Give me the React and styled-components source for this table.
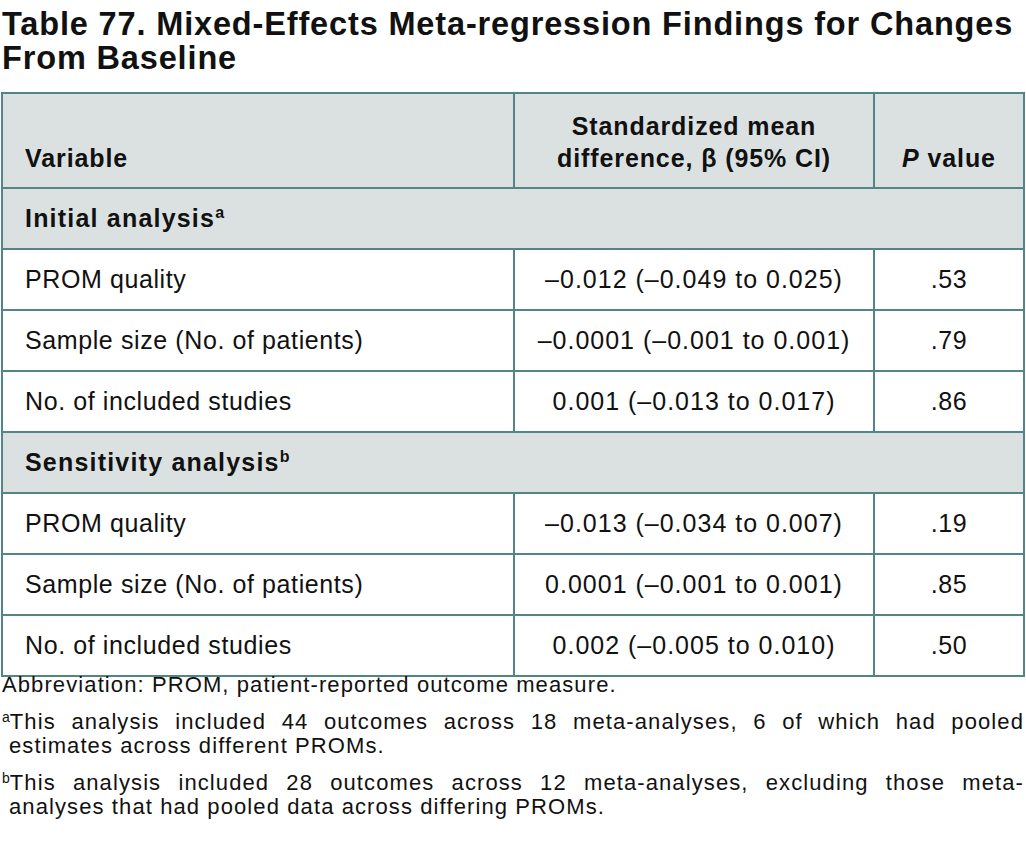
import React from "react";
import styled, { createGlobalStyle } from "styled-components";

const GlobalStyle = createGlobalStyle`
  html, body {
    margin: 0;
    padding: 0;
    background: #ffffff;
  }
  body {
    font-family: "Liberation Sans", Arial, Helvetica, sans-serif;
    color: #111111;
  }
`;

const BORDER = "#548585";
const HEAD_BG = "#dbe1e1";

const rows = [
  { section: "Initial analysis", mark: "a" },
  { variable: "PROM quality", smd: "–0.012 (–0.049 to 0.025)", p: ".53" },
  { variable: "Sample size (No. of patients)", smd: "–0.0001 (–0.001 to 0.001)", p: ".79" },
  { variable: "No. of included studies", smd: "0.001 (–0.013 to 0.017)", p: ".86" },
  { section: "Sensitivity analysis", mark: "b" },
  { variable: "PROM quality", smd: "–0.013 (–0.034 to 0.007)", p: ".19" },
  { variable: "Sample size (No. of patients)", smd: "0.0001 (–0.001 to 0.001)", p: ".85" },
  { variable: "No. of included studies", smd: "0.002 (–0.005 to 0.010)", p: ".50" },
];

export default function App() {
  return (
    <Page>
      <GlobalStyle />
      <Title>
        Table 77. Mixed-Effects Meta-regression Findings for Changes From
        Baseline
      </Title>
      <Table>
        <colgroup>
          <col style={{ width: 512 }} />
          <col style={{ width: 360 }} />
          <col />
        </colgroup>
        <thead>
          <tr>
            <HeadCell>Variable</HeadCell>
            <HeadCell center>
              Standardized mean
              <br />
              difference, β (95% CI)
            </HeadCell>
            <HeadCell center>
              <i>P</i> value
            </HeadCell>
          </tr>
        </thead>
        <tbody>
          {rows.map((r, i) =>
            r.section ? (
              <tr key={i}>
                <SectionCell colSpan={3}>
                  {r.section}
                  <sup>{r.mark}</sup>
                </SectionCell>
              </tr>
            ) : (
              <tr key={i}>
                <Cell>{r.variable}</Cell>
                <Cell center numeric>
                  {r.smd}
                </Cell>
                <Cell center>{r.p}</Cell>
              </tr>
            )
          )}
        </tbody>
      </Table>
      <Notes>
        <Note>
          <Line>Abbreviation: PROM, patient-reported outcome measure.</Line>
        </Note>
        <Note>
          <Line full>
            <sup>a</sup>This analysis included 44 outcomes across 18
            meta-analyses, 6 of which had pooled
          </Line>
          <Line indent>estimates across different PROMs.</Line>
        </Note>
        <Note>
          <Line full>
            <sup>b</sup>This analysis included 28 outcomes across 12
            meta-analyses, excluding those meta-
          </Line>
          <Line indent>analyses that had pooled data across differing PROMs.</Line>
        </Note>
      </Notes>
    </Page>
  );
}

const Page = styled.div`
  width: 1026px;
  box-sizing: border-box;
  padding: 0 1px;
`;

const Title = styled.h1`
  margin: 0;
  padding: 7px 1px 0;
  height: 92px;
  box-sizing: border-box;
  font-size: 32.5px;
  line-height: 34px;
  font-weight: 700;
  letter-spacing: 0.85px;
`;

const Table = styled.table`
  width: 1024px;
  border-collapse: collapse;
  table-layout: fixed;
  border: 2px solid ${BORDER};
  font-size: 25px;
  letter-spacing: 0.6px;
`;

const HeadCell = styled.th`
  height: 95px;
  box-sizing: border-box;
  background: ${HEAD_BG};
  border: 2px solid ${BORDER};
  padding: 0 22px 13px;
  vertical-align: bottom;
  font-weight: 700;
  line-height: 32px;
  letter-spacing: 0.9px;
  text-align: ${(p) => (p.center ? "center" : "left")};

  i {
    font-style: italic;
  }
`;

const SectionCell = styled.td`
  height: 61px;
  box-sizing: border-box;
  background: ${HEAD_BG};
  border: 2px solid ${BORDER};
  padding: 0 22px;
  font-weight: 700;
  letter-spacing: 1.2px;
  vertical-align: middle;

  sup {
    font-size: 16px;
    vertical-align: 9px;
    line-height: 0;
    letter-spacing: 0;
  }
`;

const Cell = styled.td`
  height: 61px;
  box-sizing: border-box;
  border: 2px solid ${BORDER};
  padding: 0 22px;
  vertical-align: middle;
  letter-spacing: ${(p) => (p.numeric ? "1px" : "0.6px")};
  text-align: ${(p) => (p.center ? "center" : "left")};
`;

const Notes = styled.div`
  margin-top: -4px;
  padding: 0 1px;
  display: flex;
  flex-direction: column;
  gap: 13px;
`;

const Note = styled.div`
  font-size: 22px;
  line-height: 24px;
  letter-spacing: 1.1px;
`;

const Line = styled.div`
  text-align: justify;
  text-align-last: ${(p) => (p.full ? "justify" : "left")};
  padding-left: ${(p) => (p.indent ? "7px" : "0")};

  sup {
    font-size: 14px;
    vertical-align: 7px;
    line-height: 0;
    letter-spacing: 0;
  }
`;
